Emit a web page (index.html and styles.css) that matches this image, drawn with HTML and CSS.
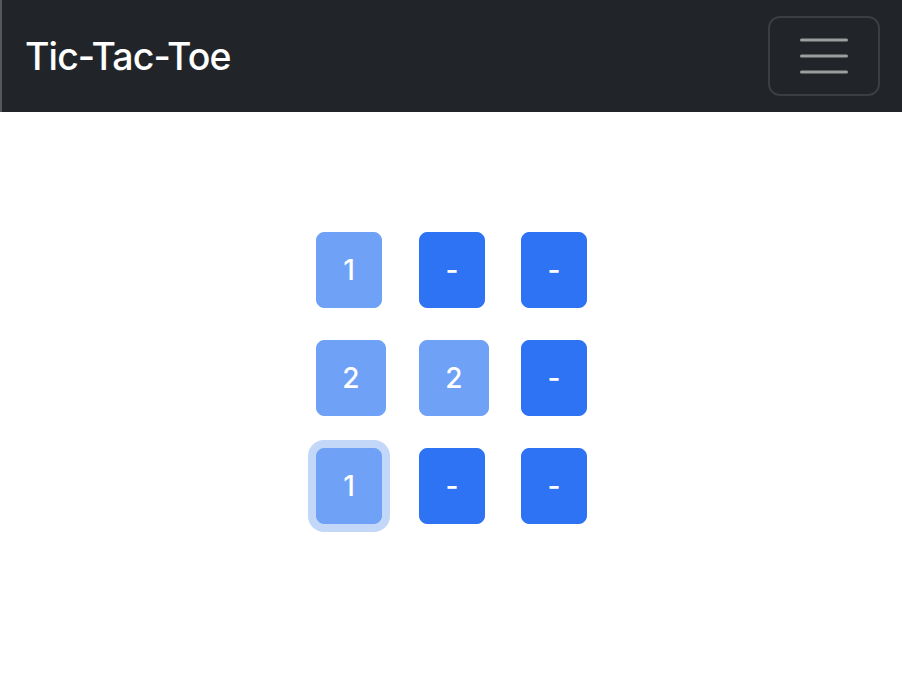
FILE: index.html
```html
<!DOCTYPE html>
<html lang="en">
<head>
<meta charset="utf-8">
<title>Tic-Tac-Toe</title>
<link rel="stylesheet" href="styles.css">
</head>
<body>
<nav class="navbar">
  <a class="brand" href="#">Tic-Tac-Toe</a>
  <button class="toggler" type="button" aria-label="Toggle navigation">
    <svg width="48" height="36" viewBox="0 0 48 36" aria-hidden="true">
      <path d="M1.5 2H46.5M1.5 18H46.5M1.5 34H46.5" stroke="#9b9c9e" stroke-width="3" stroke-linecap="round" fill="none"/>
    </svg>
  </button>
</nav>
<main class="board">
  <button class="cell played">1</button>
  <button class="cell">-</button>
  <button class="cell">-</button>
  <button class="cell played wide">2</button>
  <button class="cell played wide">2</button>
  <button class="cell">-</button>
  <button class="cell played focused">1</button>
  <button class="cell">-</button>
  <button class="cell">-</button>
</main>
</body>
</html>
```

FILE: styles.css
```css
html, body {
  margin: 0;
  padding: 0;
  background: #ffffff;
  font-family: Inter, "Liberation Sans", sans-serif;
}

.navbar {
  height: 112px;
  box-sizing: border-box;
  background: #212529;
  border-left: 2px solid #55585c;
  display: flex;
  align-items: center;
  justify-content: space-between;
  padding: 0 22px 0 23px;
}

.brand {
  color: #ffffff;
  text-decoration: none;
  font-size: 37.5px;
  font-weight: 500;
  letter-spacing: -0.9px;
  line-height: 1;
  padding-top: 2px;
}

.toggler {
  width: 112px;
  height: 80px;
  box-sizing: border-box;
  background: transparent;
  border: 2px solid #3a3e43;
  border-radius: 12px;
  display: flex;
  align-items: center;
  justify-content: center;
  padding: 0;
}

.board {
  display: grid;
  grid-template-columns: 71px 70px 67px;
  justify-content: center;
  justify-items: start;
  column-gap: 32px;
  row-gap: 32px;
  padding: 120px 0 40px 2px;
}

.cell {
  width: 66px;
  height: 76px;
  box-sizing: border-box;
  padding: 16px 0;
  font-family: Inter, "Liberation Sans", sans-serif;
  font-size: 28px;
  font-weight: 500;
  line-height: 42px;
  color: #ffffff;
  background: #2e73f4;
  border: 1px solid #2e73f4;
  border-radius: 8px;
  text-align: center;
}

.cell.played {
  background: #6fa1f6;
  border-color: #6fa1f6;
}

.cell.wide {
  width: 70px;
}

.cell.focused {
  box-shadow: 0 0 0 8px #c3d7f8;
}
```
